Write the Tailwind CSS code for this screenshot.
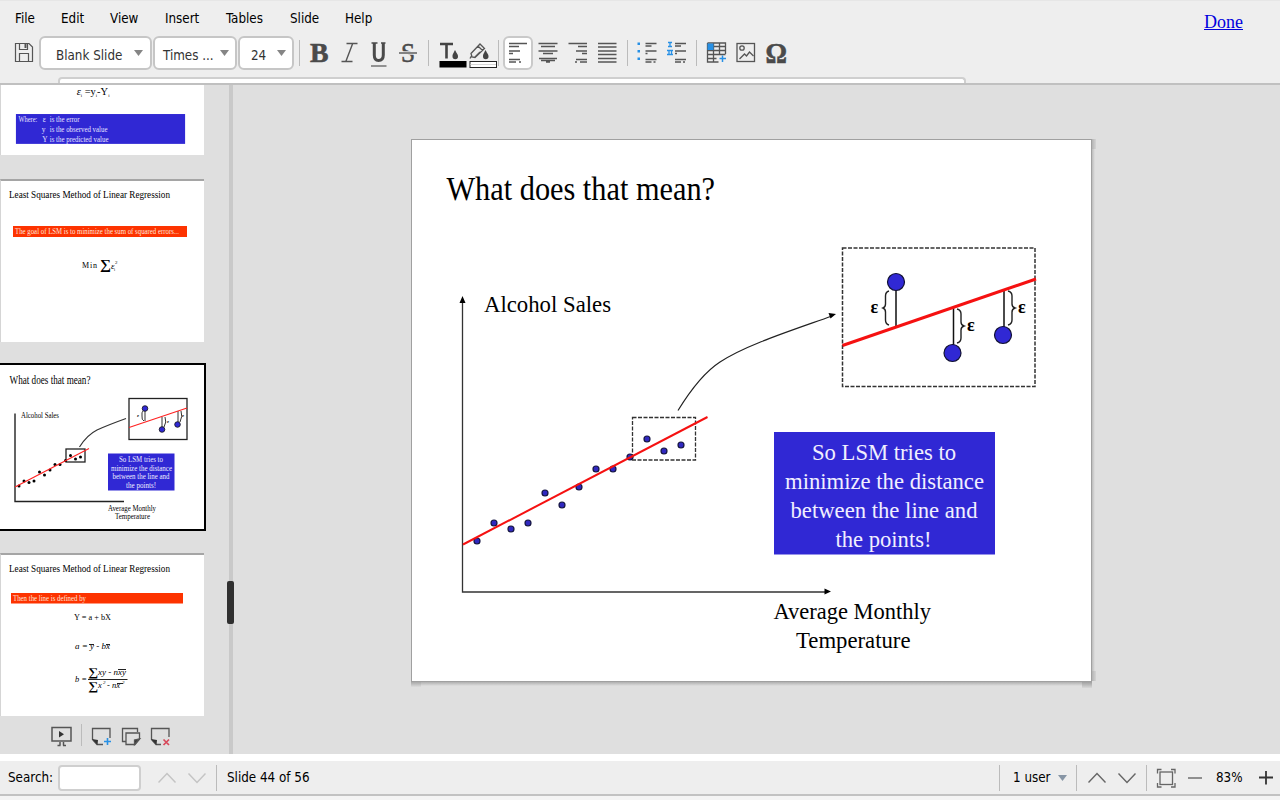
<!DOCTYPE html>
<html lang="en">
<head>
    <meta charset="UTF-8">
    <meta name="viewport" content="width=device-width, initial-scale=1.0">
    <title>Presentation</title>
    <script src="https://cdn.jsdelivr.net/npm/@tailwindcss/browser@4"></script>
</head>
<body class="w-[1280px] h-[800px] overflow-hidden flex flex-col bg-[#eeeeee] text-black text-[13.3px] font-stretch-condensed font-['DejaVu_Sans_Condensed','DejaVu_Sans',sans-serif]">

    <header class="h-[85px] shrink-0 flex flex-col border-t border-[#e6e6e6] border-b-2 border-b-[#c0c0c0] relative">
        <!-- Menu -->
        <div class="h-[35px] flex justify-between">
            <nav class="flex items-center pl-[15px]">
                <span class="w-[46px]">File</span>
                <span class="w-[49px]">Edit</span>
                <span class="w-[55px]">View</span>
                <span class="w-[61px]">Insert</span>
                <span class="w-[64px]">Tables</span>
                <span class="w-[55px]">Slide</span>
                <span>Help</span>
            </nav>
            <a href="#" class="mr-[37px] mt-[10px] leading-[22px] text-[18px] text-[#0000dd] underline font-['Liberation_Serif',serif]">Done</a>
        </div>

        <!-- Toolbar -->
        <div class="h-[34px] flex items-center text-[#333]">
            <svg class="w-[30px] h-[34px] ml-[9px] shrink-0" viewBox="0 0 30 34" fill="none" stroke="#555" stroke-width="1.2">
                <path d="M6.500 7.500H20L23.500 11V25.500H6.500Z"/><path d="M10.500 7.500V13.500H18.500V7.500M10.500 25.500V17.500H19.500V25.500"/><path d="M16.500 8V12" stroke-width="2"/>
            </svg>
            <div class="w-[113px] h-[34px] flex items-center justify-between pl-[15px] pr-[7px] bg-white border-2 border-[#c6c6c6] rounded-[6px]">
                <span class="pt-[5px]">Blank Slide</span>
                <svg class="w-[9px] h-[6px]" viewBox="0 0 9 6"><path d="M0 0H9L4.500 6Z" fill="#858585"/></svg>
            </div>
            <div class="w-[84px] h-[34px] ml-px flex items-center justify-between pl-2 pr-[6px] bg-white border-2 border-[#c6c6c6] rounded-[6px]">
                <span class="pt-[5px]">Times ...</span>
                <svg class="w-[9px] h-[6px]" viewBox="0 0 9 6"><path d="M0 0H9L4.500 6Z" fill="#858585"/></svg>
            </div>
            <div class="w-[56px] h-[34px] ml-px flex items-center justify-between pl-[11px] pr-[6px] bg-white border-2 border-[#c6c6c6] rounded-[6px]">
                <span class="pt-[5px]">24</span>
                <svg class="w-[9px] h-[6px]" viewBox="0 0 9 6"><path d="M0 0H9L4.500 6Z" fill="#858585"/></svg>
            </div>
            <div class="w-px h-[26px] ml-[5px] bg-[#bbb]"></div>

            <!-- bold, italic, underline, strike -->
            <svg class="w-[119px] h-[34px] ml-[4px] shrink-0" viewBox="0 0 119 34" fill="#4a4a4a" font-family="Liberation Serif, serif">
                <text x="6" y="25.500" font-size="28" font-weight="bold" textLength="18.500" lengthAdjust="spacingAndGlyphs" stroke="#4a4a4a" stroke-width=".6">B</text>
                <path d="M42.500 7.500H53.500M37.500 25.500H48.500M48.500 8L42 25" fill="none" stroke="#555" stroke-width="1.400"/>
                <path d="M67.500 7H73.500M77 7H81.500" stroke="#4a4a4a" stroke-width="1.600"/>
                <path d="M70.300 7V19Q70.300 24.500 74.500 24.500Q79.300 24.500 79.300 19V7" fill="none" stroke="#4a4a4a" stroke-width="3"/>
                <path d="M67 30H82.500" stroke="#555" stroke-width="1.200"/>
                <text x="97" y="26" font-size="28" textLength="14" lengthAdjust="spacingAndGlyphs" stroke="#4a4a4a" stroke-width=".6">S</text>
                <path d="M95 17H113" stroke="#eee" stroke-width="3.500"/><path d="M95 17H113" stroke="#555" stroke-width="1.400"/>
            </svg>
            <div class="w-px h-[26px] ml-[5px] bg-[#bbb]"></div>

            <!-- font and highlight colour -->
            <svg class="w-[60px] h-[34px] ml-[9px] shrink-0" viewBox="0 0 60 34" fill="none">
                <path d="M2 8H15M8.500 8V22.500" stroke="#444" stroke-width="2.600"/>
                <path d="M17 14C15 18 14.500 18.500 14.500 20.500A2.700 2.700 0 0 0 20 20.500C20 18.500 19 18 17 14Z" fill="#444"/>
                <rect x="1.500" y="25" width="27" height="6.500" fill="#000"/>
                <path d="M34 21L33 17.500L42 8L46.500 12.500L37 21.500ZM40 10L44.500 14.500M37 21L42 16M32 22.500L34 19" stroke="#555" stroke-width="1.300"/>
                <path d="M47.500 14C45.500 18 45 18.500 45 20.500A2.700 2.700 0 0 0 50.500 20.500C50.500 18.500 49.500 18 47.500 14Z" fill="#444"/>
                <rect x="32" y="25.500" width="26.500" height="6" fill="#fff" stroke="#222"/><path d="M32.500 28.500H58" stroke="#d5d5d5"/>
            </svg>
            <div class="w-px h-[26px] bg-[#bbb]"></div>

            <!-- alignment -->
            <div class="w-[30px] h-[34px] ml-[4px] shrink-0 bg-white border-2 border-[#c9c9c9] rounded-[6px]">
                <svg class="w-[26px] h-[30px]" viewBox="0 0 26 30" stroke="#555" stroke-width="1.300"><path d="M4 5.500H22M4 8.500H14M4 13H15M4 15.500H8M4 21.500H15M4 24H11M14 24H16"/></svg>
            </div>
            <svg class="w-[88px] h-[34px] shrink-0" viewBox="0 0 88 34" stroke="#555" stroke-width="1.300">
                <path d="M5.500 7.500H24.500M8 10.500H22M5.500 15H24.500M10 17.500H20M6 22.500H24M8 24.500H22M13 26H17"/>
                <path d="M35.500 7.500H54M45 10.500H54M43 15H54M49 17.500H54M43 23.500H54M42 26H44M47 26H54"/>
                <path d="M65 7.500H83.500M65 11H83.500M65 15H83.500M65 18.500H83.500M65 22.500H83.500M65 26H83.500"/>
            </svg>
            <div class="w-px h-[26px] ml-[6px] bg-[#bbb]"></div>

            <!-- lists -->
            <svg class="w-[60px] h-[34px] ml-[5px] shrink-0" viewBox="0 0 60 34" stroke="#555" stroke-width="1.300">
                <path d="M12.500 7.500H23.500M12.500 10H18.500M12.500 15H23.500M12.500 17.500H14.500M12.500 23.500H23.500M12.500 26H18.500M20.500 26H22.500"/>
                <path d="M4.500 6.500h2.500v2.500h-2.500zM4.500 14h2.500v2.500h-2.500zM4.500 21.500h2.500v2.500h-2.500z" fill="#2790e5" stroke="none"/>
                <path d="M42 7.500H53M42 10H48M42 15H53M42 17.500H44M42 23.500H53M42 26H48M50 26H52"/>
                <path d="M35 6.500H39M35 10.500H39M37 6.500V10.500M34 14.500H40M34 18.500H40M36 14.500V18.500M38.500 14.500V18.500" stroke="#2790e5"/>
            </svg>
            <div class="w-px h-[26px] ml-[3px] bg-[#bbb]"></div>

            <!-- table, image, special character -->
            <svg class="w-[92px] h-[34px] ml-[5px] shrink-0" viewBox="0 0 92 34" fill="none" stroke="#555" stroke-width="1.300">
                <path d="M5.500 7H23.500V18M5.500 7V26H16.500M5.500 10.500H23.500M5.500 14.500H23.500M5.500 18.500H23.500M5.500 22.500H14.500M11.500 7V26M17.500 7V18"/>
                <rect x="5.500" y="7.500" width="6" height="6.500" fill="#2790e5" stroke="none"/>
                <path d="M20.500 19.500V26M17.500 22.500H24" stroke="#2790e5" stroke-width="1.500"/>
                <rect x="35" y="7.500" width="17.500" height="18"/><circle cx="40" cy="12" r="2.200"/><path d="M37.500 23L42.500 18L44.500 20L47.500 16L51.500 20"/>
                <text x="63.500" y="26.500" font-family="Liberation Serif, serif" font-size="30" font-weight="bold" fill="#4a4a4a" stroke="#4a4a4a" stroke-width=".6" textLength="21.500" lengthAdjust="spacingAndGlyphs">Ω</text>
            </svg>
        </div>
        <!-- top edge of the notebook bar -->
        <div class="mt-[7px] ml-[58px] w-[908px] h-[6px] bg-white border-2 border-b-0 border-[#cfcfcf] rounded-t-[4px]"></div>
    </header>

    <main class="h-[669px] shrink-0 flex bg-[#dfdfdf]">
        <!-- Slide sorter -->
        <aside class="w-[229px] shrink-0 flex flex-col">
            <svg class="w-[204px] h-[70px] bg-white shrink-0 border-l border-[#d5d5d5]" viewBox="0 0 204 70" font-family="Liberation Serif, serif">
                <text x="76" y="10" font-size="11" textLength="33" lengthAdjust="spacingAndGlyphs"><tspan font-style="italic">ε</tspan><tspan font-size="5" dy="2">i</tspan><tspan dy="-2"> =y</tspan><tspan font-size="5" dy="2">i</tspan><tspan dy="-2">-Y</tspan><tspan font-size="5" dy="2">i</tspan></text>
                <rect x="15" y="29" width="170" height="30" fill="#3028d4"/>
                <g fill="#e4e2ff" font-size="7.500">
                    <text x="17.500" y="37" textLength="19" lengthAdjust="spacingAndGlyphs">Where:</text>
                    <text x="42" y="37">ε</text><text x="49" y="37" textLength="30" lengthAdjust="spacingAndGlyphs">is the error</text>
                    <text x="41" y="47">y</text><text x="49" y="47" textLength="58" lengthAdjust="spacingAndGlyphs">is the observed value</text>
                    <text x="41.500" y="57">Y</text><text x="49" y="57" textLength="59" lengthAdjust="spacingAndGlyphs">is the predicted value</text>
                </g>
            </svg>

            <svg class="w-[204px] h-[163px] mt-[24px] bg-white shrink-0 border-t-2 border-t-[#a5a5a5] border-l border-l-[#d5d5d5]" viewBox="0 0 203 161" font-family="Liberation Serif, serif">
                <text x="8" y="16.500" font-size="11" textLength="161" lengthAdjust="spacingAndGlyphs">Least Squares Method of Linear Regression</text>
                <rect x="12" y="45" width="174" height="11" fill="#fd3300"/>
                <text x="14" y="53" font-size="7.500" fill="#ffe6dc" textLength="164" lengthAdjust="spacingAndGlyphs">The goal of LSM is to minimize the sum of squared errors...</text>
                <text x="81" y="87" font-size="8" textLength="15">Min</text>
                <text x="99" y="88" font-size="14" textLength="11" font-weight="bold" lengthAdjust="spacingAndGlyphs">∑</text>
                <text x="110" y="87.500" font-size="9" font-style="italic">ε</text><text x="114" y="83" font-size="5">2</text><text x="113" y="90" font-size="4">i</text>
            </svg>

            <svg class="w-[206px] h-[168px] mt-[21px] bg-white shrink-0 border-2 border-l-0 border-black" viewBox="0 0 204 164" font-family="Liberation Serif, serif">
                <text x="9.500" y="18.500" font-size="11.500" textLength="81" lengthAdjust="spacingAndGlyphs">What does that mean?</text>
                <text x="21" y="52.500" font-size="7.500" textLength="38" lengthAdjust="spacingAndGlyphs">Alcohol Sales</text>
                <path d="M15 48.500V136.500H124" fill="none" stroke="#222" stroke-width="1.400"/>
                <rect x="66" y="84" width="19" height="13" fill="none" stroke="#222" stroke-width="1.300"/>
                <g>
                    <circle cx="19" cy="121" r="1.500"/><circle cx="24" cy="116" r="1.500"/><circle cx="29" cy="117.500" r="1.500"/><circle cx="34" cy="116" r="1.500"/><circle cx="39.500" cy="107" r="1.500"/><circle cx="44.500" cy="110" r="1.500"/><circle cx="50" cy="105" r="1.500"/><circle cx="55" cy="99.500" r="1.500"/><circle cx="60" cy="99.500" r="1.500"/><circle cx="65.500" cy="95.500" r="1.500"/><circle cx="70.500" cy="90.500" r="1.500"/><circle cx="75.500" cy="94" r="1.500"/><circle cx="80.500" cy="92" r="1.500"/>
                </g>
                <path d="M15 122L89 83.500" stroke="#f22" stroke-width="1.200"/>
                <path d="M79.500 82Q87 70 97 65Q108 60 126 53.500" fill="none" stroke="#333" stroke-width="1.200"/>
                <rect x="129" y="33.500" width="58" height="41" fill="none" stroke="#222" stroke-width="1.300"/>
                <path d="M145 45V56M143 46Q141.500 47 142 51Q141.500 55 144 56M162 52V62M165 52Q167 57 164 62M178 46V57M181 46Q183 51 180 57" stroke="#333" fill="none"/>
                <path d="M129 62.500L187 43" stroke="#f22" stroke-width="1.200"/>
                <g fill="#3028d4" stroke="#111" stroke-width=".800"><circle cx="145" cy="43.500" r="2.800"/><circle cx="162" cy="64.500" r="2.800"/><circle cx="177.500" cy="59.500" r="2.800"/></g>
                <g font-size="5" font-weight="bold"><text x="137" y="52">ε</text><text x="167" y="58">ε</text><text x="182" y="52">ε</text></g>
                <rect x="108" y="88.500" width="66.500" height="37" fill="#3028d4"/>
                <g fill="#eeeeff" font-size="7.500">
                    <text x="119" y="97" textLength="44" lengthAdjust="spacingAndGlyphs">So LSM tries to</text>
                    <text x="111" y="105.500" textLength="61" lengthAdjust="spacingAndGlyphs">minimize the distance</text>
                    <text x="112.500" y="114" textLength="57" lengthAdjust="spacingAndGlyphs">between the line and</text>
                    <text x="126" y="122.500" textLength="30" lengthAdjust="spacingAndGlyphs">the points!</text>
                </g>
                <text x="108" y="145.500" font-size="7.500" textLength="48" lengthAdjust="spacingAndGlyphs">Average Monthly</text>
                <text x="115" y="154" font-size="7.500" textLength="35" lengthAdjust="spacingAndGlyphs">Temperature</text>
            </svg>

            <svg class="w-[204px] h-[163px] mt-[22px] bg-white shrink-0 border-t-2 border-t-[#a5a5a5] border-l border-l-[#d5d5d5]" viewBox="0 0 203 161" font-family="Liberation Serif, serif">
                <text x="8" y="16.500" font-size="11" textLength="161" lengthAdjust="spacingAndGlyphs">Least Squares Method of Linear Regression</text>
                <rect x="10" y="38" width="172" height="10.500" fill="#fd3300"/>
                <text x="12" y="46" font-size="7.500" fill="#ffe6dc" textLength="73" lengthAdjust="spacingAndGlyphs">Then the line is defined by</text>
                <text x="73" y="65" font-size="8.500" textLength="37" lengthAdjust="spacingAndGlyphs">Y = a + bX</text>
                <g font-style="italic" font-size="8.500">
                    <text x="74" y="94" textLength="35" lengthAdjust="spacingAndGlyphs">a = y - bx</text>
                    <text x="74" y="127" textLength="12" lengthAdjust="spacingAndGlyphs">b =</text>
                    <text x="97" y="120" textLength="28" lengthAdjust="spacingAndGlyphs">xy - nxy</text>
                    <text x="97" y="133">x</text><text x="102" y="129" font-size="5">2</text><text x="106" y="133">- nx</text><text x="121" y="129" font-size="5">2</text>
                </g>
                <text x="87" y="121" font-size="12" font-weight="bold" textLength="10" lengthAdjust="spacingAndGlyphs">∑</text>
                <text x="87" y="134.500" font-size="12" font-weight="bold" textLength="10" lengthAdjust="spacingAndGlyphs">∑</text>
                <path d="M87 124.500H126.500M117 114.500H125M116 128.500H122M88 89.500H93M105 89.500H109" stroke="#222" stroke-width="1.100"/>
            </svg>

            <div class="h-[38px] shrink-0 flex items-center pl-[50px]">
                <svg class="w-[24px] h-[24px] mt-[4px]" viewBox="0 0 24 24" fill="none" stroke="#555" stroke-width="1.500"><rect x="2" y="2.500" width="19" height="13.500"/><path d="M9 6L14 9.300L9 12.500Z" fill="#333" stroke="none"/><path d="M10 17V20.500M13.500 17V20.500M7.500 20.500H10.500M13 20.500H16"/></svg>
                <div class="w-px h-[22px] ml-[7px] mr-[8px] bg-[#bbb]"></div>
                <svg class="w-[90px] h-[24px] mt-[4px]" viewBox="0 0 90 24" fill="none" stroke="#555" stroke-width="1.300">
                    <path d="M20 13V3.500H2.500V14.500L7 19.500H13"/><path d="M2 14L8 15L7.500 20Z" fill="#333" stroke="none"/><path d="M17.500 13V20M14 16.500H21" stroke="#2790e5" stroke-width="1.600"/>
                    <path d="M36 16.500H32.500V3.500H47.500V7"/><path d="M36 8H49.500V14L45 19.500H36Z"/><path d="M49.500 14L44.500 15L44.500 19.500Z" fill="#333"/>
                    <path d="M79 12V3.500H61.500V14.500L66 19.500H71"/><path d="M61 14L67 15L66.500 20Z" fill="#333" stroke="none"/><path d="M73.500 14.500L79 20M79 14.500L73.500 20" stroke="#d8485a" stroke-width="1.700"/>
                </svg>
            </div>
        </aside>
        <div class="w-[4px] shrink-0 bg-[#c9c9c9] relative">
            <div class="absolute -left-[2px] top-[496px] w-[7px] h-[43px] rounded-[2px] bg-[#303030]"></div>
        </div>

        <!-- Current slide -->
        <section class="pl-[178px] pt-[54px]">
            <div class="relative w-[681px] h-[543px]">
                <div class="absolute left-0 top-[543px] w-[10px] h-[5px] bg-linear-to-b from-[#a8a8a8] to-[#dcdcdc]"></div>
                <div class="absolute left-[10px] top-[543px] w-[661px] h-[4px] bg-linear-to-b from-[#b0b0b0] to-[#dfdfdf]"></div>
                <div class="absolute left-[671px] top-[543px] w-[10px] h-[6px] bg-linear-to-b from-[#a0a0a0] to-[#d8d8d8]"></div>
                <div class="absolute left-[681px] top-[10px] w-[3px] h-[522px] bg-linear-to-r from-[#bcbcbc] to-[#dfdfdf]"></div>
                <div class="absolute left-[681px] top-0 w-[4px] h-[10px] bg-linear-to-r from-[#b4b4b4] to-[#d4d4d4]"></div>
                <div class="absolute left-[681px] top-[532px] w-[4px] h-[10px] bg-linear-to-r from-[#b4b4b4] to-[#d4d4d4]"></div>
                <svg class="w-[681px] h-[543px] bg-white border border-[#a0a0a0]" viewBox="0 0 679 541" font-family="Liberation Serif, serif">
                    <text x="34.500" y="59.500" font-size="33" textLength="268.500" lengthAdjust="spacingAndGlyphs">What does that mean?</text>
                    <text x="72" y="171.500" font-size="24" textLength="127" lengthAdjust="spacingAndGlyphs">Alcohol Sales</text>

                    <path d="M50.500 160V452H414" fill="none" stroke="#333" stroke-width="1.300"/>
                    <path d="M50.500 156L53.500 163H47.500ZM419 451.500L412.500 448.500V454.500Z"/>

                    <g fill="#3028c0" stroke="#151540" stroke-width="1.200">
                        <circle cx="65" cy="401" r="3"/><circle cx="82" cy="383" r="3"/><circle cx="99" cy="389" r="3"/><circle cx="116" cy="383" r="3"/><circle cx="133" cy="353" r="3"/><circle cx="150" cy="365" r="3"/><circle cx="167" cy="347" r="3"/><circle cx="184" cy="329" r="3"/><circle cx="201" cy="329" r="3"/><circle cx="218" cy="317" r="3"/><circle cx="235" cy="299" r="3"/><circle cx="252" cy="311" r="3"/><circle cx="269" cy="305" r="3"/>
                    </g>
                    <rect x="220.500" y="277.500" width="63" height="42.500" fill="none" stroke="#333" stroke-width="1.300" stroke-dasharray="4 1.500"/>
                    <path d="M51 404.500L295.500 277" stroke="#f51111" stroke-width="2"/>
                    <path d="M266 270.500C278 251 291 233 308 222C334 205 378 191 420 176" fill="none" stroke="#222" stroke-width="1.200"/>
                    <path d="M424 174L418.500 178.500L416.500 173Z"/>

                    <rect x="430.500" y="108" width="192.500" height="138.500" fill="none" stroke="#333" stroke-width="1.500" stroke-dasharray="4 1.500"/>
                    <path d="M484 150V187M541.500 167V205M592 149V187" stroke="#111" stroke-width="1.500"/>
                    <path d="M430.500 205.500L624 139" stroke="#f51111" stroke-width="3"/>
                    <g fill="#3028d4" stroke="#111133" stroke-width="1.200"><circle cx="484" cy="142" r="8.500"/><circle cx="540.500" cy="213" r="8.500"/><circle cx="591" cy="195" r="8.500"/></g>
                    <g fill="none" stroke="#222" stroke-width="1.400">
                        <path d="M477 151Q473.500 152 473.500 156V164Q473.500 167 471 168Q473.500 169 473.500 172V180Q473.500 184 477 185"/>
                        <path d="M545 169Q549 170 549 174V182Q549 185 552 186Q549 187 549 190V198Q549 202 545 203"/>
                        <path d="M596 151Q600 152 600 156V164Q600 167 603 168Q600 169 600 172V180Q600 184 596 185"/>
                    </g>
                    <g font-size="18" font-weight="bold"><text x="458.500" y="173">ε</text><text x="555" y="191">ε</text><text x="606" y="173">ε</text></g>

                    <rect x="362" y="292" width="221" height="122.500" fill="#3028d4"/>
                    <g fill="#f0efff" font-size="24">
                        <text x="400" y="320" textLength="144" lengthAdjust="spacingAndGlyphs">So LSM tries to</text>
                        <text x="373" y="349" textLength="199" lengthAdjust="spacingAndGlyphs">minimize the distance</text>
                        <text x="378.500" y="378" textLength="187" lengthAdjust="spacingAndGlyphs">between the line and</text>
                        <text x="423.500" y="407" textLength="96" lengthAdjust="spacingAndGlyphs">the points!</text>
                    </g>
                    <text x="361.500" y="479" font-size="24" textLength="157.500" lengthAdjust="spacingAndGlyphs">Average Monthly</text>
                    <text x="384" y="508" font-size="24" textLength="114.500" lengthAdjust="spacingAndGlyphs">Temperature</text>
                </svg>
            </div>
        </section>
    </main>

    <div class="h-[7px] shrink-0 bg-white"></div>

    <!-- Status bar -->
    <footer class="h-[35px] shrink-0 flex items-center border-b-2 border-[#c2c2c2]">
        <span class="w-[50px] pl-2">Search:</span>
        <div class="w-[83px] h-[26px] ml-[8px] bg-white border-2 border-[#cfcfcf] rounded-[4px]"></div>
        <svg class="w-[48px] h-[14px] ml-[17px]" viewBox="0 0 48 14" fill="none" stroke="#c4c4c4" stroke-width="1.500"><path d="M0.500 11.500L9 2.500L17.500 11.500M30.500 2.500L39 11.500L47.500 2.500"/></svg>
        <div class="w-px h-[26px] ml-[10px] bg-[#bbb]"></div>
        <span class="ml-[10px] whitespace-nowrap">Slide 44 of 56</span>
        <div class="ml-auto flex items-center">
            <div class="w-px h-[26px] bg-[#bbb]"></div>
            <span class="w-[45px] ml-[13px]">1 user</span>
            <svg class="w-[9px] h-[6px]" viewBox="0 0 9 6"><path d="M0 0H9L4.500 6Z" fill="#8795a5"/></svg>
            <div class="w-px h-[26px] ml-[9px] bg-[#bbb]"></div>
            <svg class="w-[48px] h-[14px] ml-[11px]" viewBox="0 0 48 14" fill="none" stroke="#666" stroke-width="1.400"><path d="M0.500 11.500L9 2.500L17.500 11.500M30.500 2.500L39 11.500L47.500 2.500"/></svg>
            <div class="w-px h-[26px] ml-[10px] bg-[#bbb]"></div>
            <svg class="w-[20px] h-[20px] ml-[9px]" viewBox="0 0 20 20" fill="none" stroke="#666" stroke-width="1.300"><rect x="4" y="4" width="12.500" height="12.500"/><path d="M1.500 5.500V1.500H5.500M15 1.500H19V5.500M19 15V19H15M5.500 19H1.500V15"/></svg>
            <svg class="w-[14px] h-[14px] ml-[12px]" viewBox="0 0 14 14" stroke="#666" stroke-width="1.400"><path d="M0 7H14"/></svg>
            <span class="w-[43px] ml-[14px]">83%</span>
            <svg class="w-[14px] h-[14px] mr-[7px]" viewBox="0 0 14 14" stroke="#333" stroke-width="1.800"><path d="M0 6.500H14M7 0V13.500"/></svg>
        </div>
    </footer>
    <div class="flex-1 bg-[#f4f4f4]"></div>
</body>
</html>
